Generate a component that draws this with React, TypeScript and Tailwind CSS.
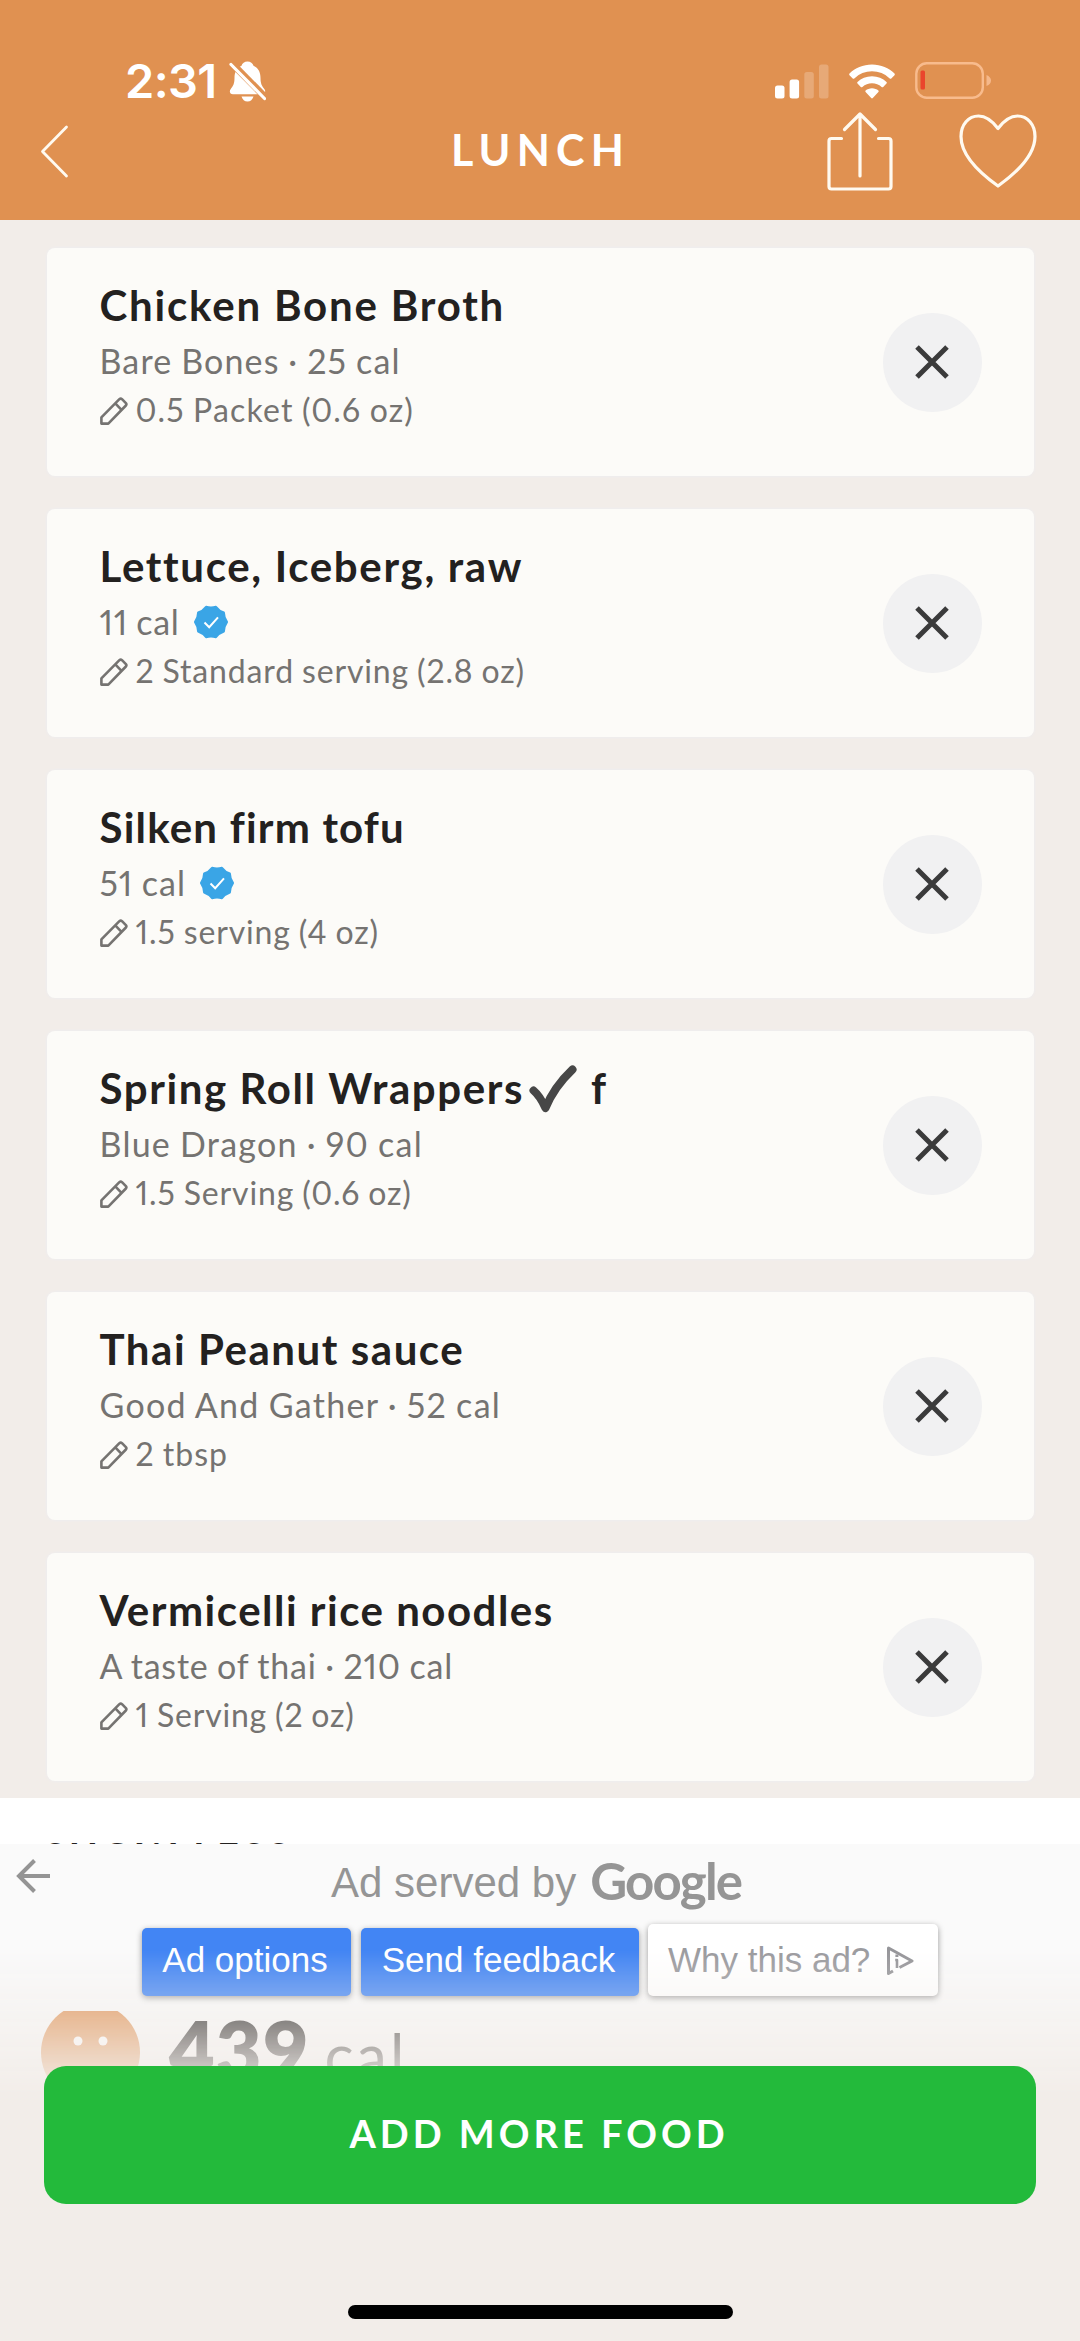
import type { ReactNode } from "react";

type FoodItem = {
  name: ReactNode;
  info: string;
  serving: string;
  verified?: boolean;
  nameTracking: string;
  infoTracking: string;
  servingTracking: string;
};

const foods: FoodItem[] = [
  {
    name: "Chicken Bone Broth",
    info: "Bare Bones · 25 cal",
    serving: "0.5 Packet (0.6 oz)",
    nameTracking: "tracking-[1.800px]",
    infoTracking: "tracking-[1.140px]",
    servingTracking: "tracking-[1.170px]",
  },
  {
    name: "Lettuce, Iceberg, raw",
    info: "11 cal",
    serving: "2 Standard serving (2.8 oz)",
    verified: true,
    nameTracking: "tracking-[1.670px]",
    infoTracking: "tracking-[0.700px]",
    servingTracking: "tracking-[0.850px]",
  },
  {
    name: "Silken firm tofu",
    info: "51 cal",
    serving: "1.5 serving (4 oz)",
    verified: true,
    nameTracking: "tracking-[1.200px]",
    infoTracking: "tracking-[1px]",
    servingTracking: "tracking-[0.850px]",
  },
  {
    name: (
      <>
        Spring Roll Wrappers
        <HeavyCheck />f
      </>
    ),
    info: "Blue Dragon · 90 cal",
    serving: "1.5 Serving (0.6 oz)",
    nameTracking: "tracking-[1.600px]",
    infoTracking: "tracking-[1.250px]",
    servingTracking: "tracking-[0.850px]",
  },
  {
    name: "Thai Peanut sauce",
    info: "Good And Gather · 52 cal",
    serving: "2 tbsp",
    nameTracking: "tracking-[1.550px]",
    infoTracking: "tracking-[1.300px]",
    servingTracking: "tracking-[1px]",
  },
  {
    name: "Vermicelli rice noodles",
    info: "A taste of thai · 210 cal",
    serving: "1 Serving (2 oz)",
    nameTracking: "tracking-[1.500px]",
    infoTracking: "tracking-[0.800px]",
    servingTracking: "tracking-[0.800px]",
  },
];

function HeavyCheck() {
  return (
    <svg viewBox="0 0 48 48" className="-my-2 mr-[14px] ml-[5px] inline-block h-[48px] w-[48px] align-[-1px]">
      <path d="M4.500 25.500Q11 31 16.500 43Q25 22 43.500 4.500" fill="none" stroke="#474747" strokeWidth="8" strokeLinecap="round" strokeLinejoin="round" />
    </svg>
  );
}

function PencilIcon() {
  return (
    <svg viewBox="0 0 28 28" className="mt-[1px] h-[28px] w-[28px]" fill="none" stroke="#757371" strokeWidth="2.600" strokeLinejoin="round">
      <path d="M1.400 26.600V20.400L19.400 2.200Q20.700 1.100 22 2.200L25.900 6.100Q26.900 7.300 25.900 8.500L8.300 26.600ZM15.300 6.400L21.500 12.800" />
    </svg>
  );
}

// ten-pointed seal, one soft bump every 36 degrees
const polar = (radius: number, degrees: number) => {
  const angle = (degrees * Math.PI) / 180;
  return `${(radius * Math.sin(angle)).toFixed(2)} ${(-radius * Math.cos(angle)).toFixed(2)}`;
};
const sealPath =
  `M${polar(15.9, 18)}` +
  Array.from({ length: 10 }, (_, i) => `Q${polar(13.6, 36 + i * 36)} ${polar(15.9, 54 + i * 36)}`).join("") +
  "Z";

function VerifiedBadge() {
  return (
    <svg viewBox="-17 -17 34 34" className="ml-[14px] h-[34px] w-[34px]">
      <path d={sealPath} fill="#3aa5e6" stroke="#3aa5e6" strokeWidth="2.200" strokeLinejoin="round" />
      <path d="M-6.500 0.500L-1.800 5.200L7 -4.600" fill="none" stroke="#fff" strokeWidth="2" />
    </svg>
  );
}

function StatusBar() {
  return (
    <div className="flex h-[42px] items-center pr-[88px] pl-[125px]">
      <span className="-mt-[2px] font-['Inter'] text-[47px] leading-none font-semibold tracking-[-0.600px]">2:31</span>
      <svg viewBox="0 0 37 41" className="ml-[12px] h-[41px] w-[37px]">
        <path d="M18.500 0.500C21.500 0.500 23.800 2.300 24.500 4.800C29.500 7 31.500 11.500 31.500 17C31.500 23 33 25 35.500 28.200C37 30.500 36 33.200 33 33.200H4C1 33.200 0 30.500 1.600 28.200C4 25 5.500 23 5.500 17C5.500 11.500 7.500 7 12.500 4.800C13.200 2.300 15.500 0.500 18.500 0.500Z" fill="#fff" />
        <path d="M12.500 35.500H24.500C23.500 38.600 21.500 40.500 18.500 40.500S13.500 38.600 12.500 35.500Z" fill="#fff" />
        <path d="M2 1.500L35.500 35.500" stroke="#e09151" strokeWidth="7" />
        <path d="M2 3.500L35.500 37.500" stroke="#fff" strokeWidth="3.200" strokeLinecap="round" />
      </svg>
      <svg viewBox="0 0 54 35" className="ml-auto h-[35px] w-[54px]" fill="#fff">
        <rect x="0" y="21.500" width="9.500" height="13" rx="2.500" />
        <rect x="14.600" y="15.500" width="9.500" height="19" rx="2.500" />
        <rect x="29.300" y="8" width="9.500" height="26.500" rx="2.500" opacity="0.22" />
        <rect x="44" y="0.500" width="9.500" height="34" rx="2.500" opacity="0.22" />
      </svg>
      <svg viewBox="0 0 46 35" className="ml-[20px] h-[35px] w-[46px]" fill="#fff">
        <path d="M23 0.500C32 0.500 40 4 45.500 9.500Q46.200 10.300 45.500 11.200L42.300 14.400Q41.500 15 40.700 14.400A25.500 25.500 0 0 0 5.300 14.400Q4.500 15 3.700 14.400L0.500 11.200Q-0.200 10.300 0.500 9.500C6 4 14 0.500 23 0.500Z" />
        <path d="M23 12.300C28.800 12.300 33.700 14.500 37.500 18Q38.300 18.800 37.500 19.600L34.200 22.900Q33.400 23.600 32.600 22.900A14.200 14.200 0 0 0 13.400 22.900Q12.600 23.600 11.800 22.900L8.500 19.600Q7.700 18.800 8.500 18C12.300 14.500 17.200 12.300 23 12.300Z" />
        <path d="M23 24.300C25.500 24.300 27.700 25.200 29.400 26.600Q30.100 27.300 29.400 28L23.800 34Q23 34.800 22.200 34L16.600 28Q15.900 27.300 16.600 26.600C18.300 25.200 20.500 24.300 23 24.300Z" />
      </svg>
      <svg viewBox="0 0 77 37" className="-mt-[2px] ml-[20px] h-[37px] w-[77px]" fill="none">
        <rect x="1.300" y="1.300" width="66.500" height="34.400" rx="10.500" stroke="#f8bb8d" strokeWidth="2.400" />
        <path d="M71.500 13Q76 15 76 18.500T71.500 24Z" fill="#f5b88b" />
        <rect x="5.500" y="8.500" width="4.500" height="19" rx="1.500" fill="#ea452c" />
      </svg>
    </div>
  );
}

function Header() {
  return (
    <header className="h-[220px] bg-[#e09151] pt-[60px] text-white">
      <StatusBar />
      <div className="grid h-[98px] grid-cols-[1fr_auto_1fr] items-center pr-[43px] pl-[40px]">
        <svg viewBox="0 0 30 54" className="h-[54px] w-[30px]" fill="none" stroke="#fffaf0" strokeWidth="2.800" strokeLinecap="round" strokeLinejoin="round">
          <path d="M26.500 3L2.500 27.500L26.500 52" />
        </svg>
        <h1 className="-mt-[4px] pl-[4px] text-[43px] leading-none font-bold tracking-[6.200px]">LUNCH</h1>
        <div className="flex items-center justify-end">
          <svg viewBox="0 0 66 80" className="h-[80px] w-[66px]" fill="none" stroke="#fffaf0" strokeWidth="3.200" strokeLinecap="round" strokeLinejoin="round">
            <path d="M14.500 27.500H4.500Q2 27.500 2 30V75.500Q2 78 4.500 78H61.500Q64 78 64 75.500V30Q64 27.500 61.500 27.500H51.500M33 65V3M17.500 18.500L33 3L48.500 18.500" />
          </svg>
          <svg viewBox="0 0 78 74" className="ml-[66px] h-[74px] w-[78px]" fill="none" stroke="#fffaf0" strokeWidth="3.200" strokeLinejoin="round">
            <path d="M39 14.500C33 6.500 27.500 2 19.500 2C9.500 2 2 10.500 2 22.500C2 40.500 18 57 39 72C60 57 76 40.500 76 22.500C76 10.500 68.500 2 58.500 2C50.500 2 45 6.500 39 14.500Z" />
          </svg>
        </div>
      </div>
    </header>
  );
}

function FoodCard({ food }: { food: FoodItem }) {
  return (
    <li className="flex h-[228px] items-center justify-between rounded-[8px] bg-[#fcfbf8] pr-[52px] pl-[53px] shadow-[0_0_3px_#ecedf2]">
      <div className="h-full pt-[32px]">
        <h2 className={`h-[50px] text-[42px] leading-[50px] font-bold whitespace-nowrap text-[#232120] ${food.nameTracking}`}>{food.name}</h2>
        <div className="mt-[7px] flex h-[48px] items-center proportional-nums [word-spacing:-1px]">
          <p className={`text-[34px] leading-[48px] whitespace-nowrap text-[#757371] ${food.infoTracking}`}>{food.info}</p>
          {food.verified && <VerifiedBadge />}
        </div>
        <div className="mt-[1px] flex h-[48px] items-center proportional-nums [word-spacing:-1px]">
          <PencilIcon />
          <p className={`ml-[8px] text-[32px] leading-[48px] whitespace-nowrap text-[#757371] ${food.servingTracking}`}>{food.serving}</p>
        </div>
      </div>
      <button className="flex h-[99px] w-[99px] items-center justify-center rounded-full bg-[#f1f1f2]">
        <svg viewBox="0 0 34 34" className="h-[34px] w-[34px]" stroke="#3b3b3b" strokeWidth="5">
          <path d="M2 2L32 32M32 2L2 32" />
        </svg>
      </button>
    </li>
  );
}

function AdPanel() {
  return (
    <section className="h-[167px] bg-[#fafafa] pt-[10px] font-['Liberation_Sans']">
      <div className="flex h-[70px] items-start">
        <svg viewBox="0 0 34 34" className="mt-[5px] ml-[16px] h-[34px] w-[34px]" fill="none" stroke="#949494" strokeWidth="4">
          <path d="M34 17H3M18.500 1.500L3 17L18.500 32.500" />
        </svg>
        <p className="-mt-[1px] ml-[281px] text-[42px] leading-[60px] text-[#959595]">Ad served by</p>
        <span className="-mt-[3px] ml-[14px] font-['Lato'] text-[51px] leading-[60px] font-bold tracking-[-1.800px] text-[#959595]">Google</span>
      </div>
      <div className="flex items-end justify-center gap-[9.500px]">
        <button className="h-[68px] w-[209px] rounded-[5px] bg-[#4285f4] pr-[3px] pb-[3px] text-[35px] text-white shadow-[0_2px_6px_rgba(0,0,0,0.4)]">Ad options</button>
        <button className="h-[68px] w-[278px] rounded-[5px] bg-[#4285f4] pr-[2px] pb-[3px] text-[35px] text-white shadow-[0_2px_6px_rgba(0,0,0,0.4)]">Send feedback</button>
        <button className="flex h-[72px] w-[290px] items-center rounded-[5px] bg-white pt-[1px] pl-[20px] text-[35px] text-[#9b9b9f] shadow-[0_2px_6px_rgba(0,0,0,0.4)]">
          Why this ad?
          <svg viewBox="0 0 28 30" className="ml-[16px] h-[30px] w-[28px]" fill="none" stroke="#96969a" strokeWidth="3" strokeLinejoin="round">
            <path d="M7 25L2.500 27.500V2L26 15L13.500 21.500" />
            <path d="M9.200 14H11V22M9.400 9.800H12.400" strokeWidth="2.600" />
          </svg>
        </button>
      </div>
    </section>
  );
}

export default function App() {
  return (
    <main className="relative h-[2341px] w-[1080px] overflow-hidden bg-[#f2ede9] font-['Lato',sans-serif]">
      <Header />
      <ul className="flex h-[1578px] flex-col gap-[33.100px] pt-[28px] pr-[46.500px] pl-[46.500px]">
        {foods.map((food) => (
          <FoodCard key={food.serving} food={food} />
        ))}
      </ul>
      <div className="h-[46px] overflow-hidden bg-white pl-[44px]">
        <p className="pt-[35px] text-[38px] leading-[46px] font-bold tracking-[4px] text-[#232120]">SHOW LESS</p>
      </div>
      <AdPanel />
      <section className="flex h-[84px] items-start overflow-hidden bg-[#fafafa] pl-[41px]">
        <svg viewBox="0 8 99 76" className="h-[76px] w-[99px]">
          <circle cx="49.500" cy="49.500" r="49.500" fill="#e09151" />
          <circle cx="37" cy="38" r="4.500" fill="#fff" />
          <circle cx="62" cy="38" r="4.500" fill="#fff" />
        </svg>
        <p className="ml-[29px] text-[79px] leading-[76px] font-extrabold tracking-[1px] text-[#232120]">
          439<span className="ml-[15px] text-[61px] font-normal tracking-[3px] text-[#3a3836]">cal</span>
        </p>
      </section>

      {/* fade behind the sticky button */}
      <div className="absolute inset-x-0 top-[1950px] bottom-0 bg-[#f2ede9] mask-[linear-gradient(to_bottom,transparent,black_145px)]" />
      <footer className="absolute inset-x-0 bottom-0 flex h-[275px] flex-col items-center">
        <button className="h-[138px] w-[992px] rounded-[22px] bg-[#23ba3b] pr-[2px] pb-[3px] text-[38px] font-bold tracking-[4px] text-white">ADD MORE FOOD</button>
        <div className="mt-[101px] h-[14px] w-[385px] rounded-full bg-black" />
      </footer>
    </main>
  );
}
